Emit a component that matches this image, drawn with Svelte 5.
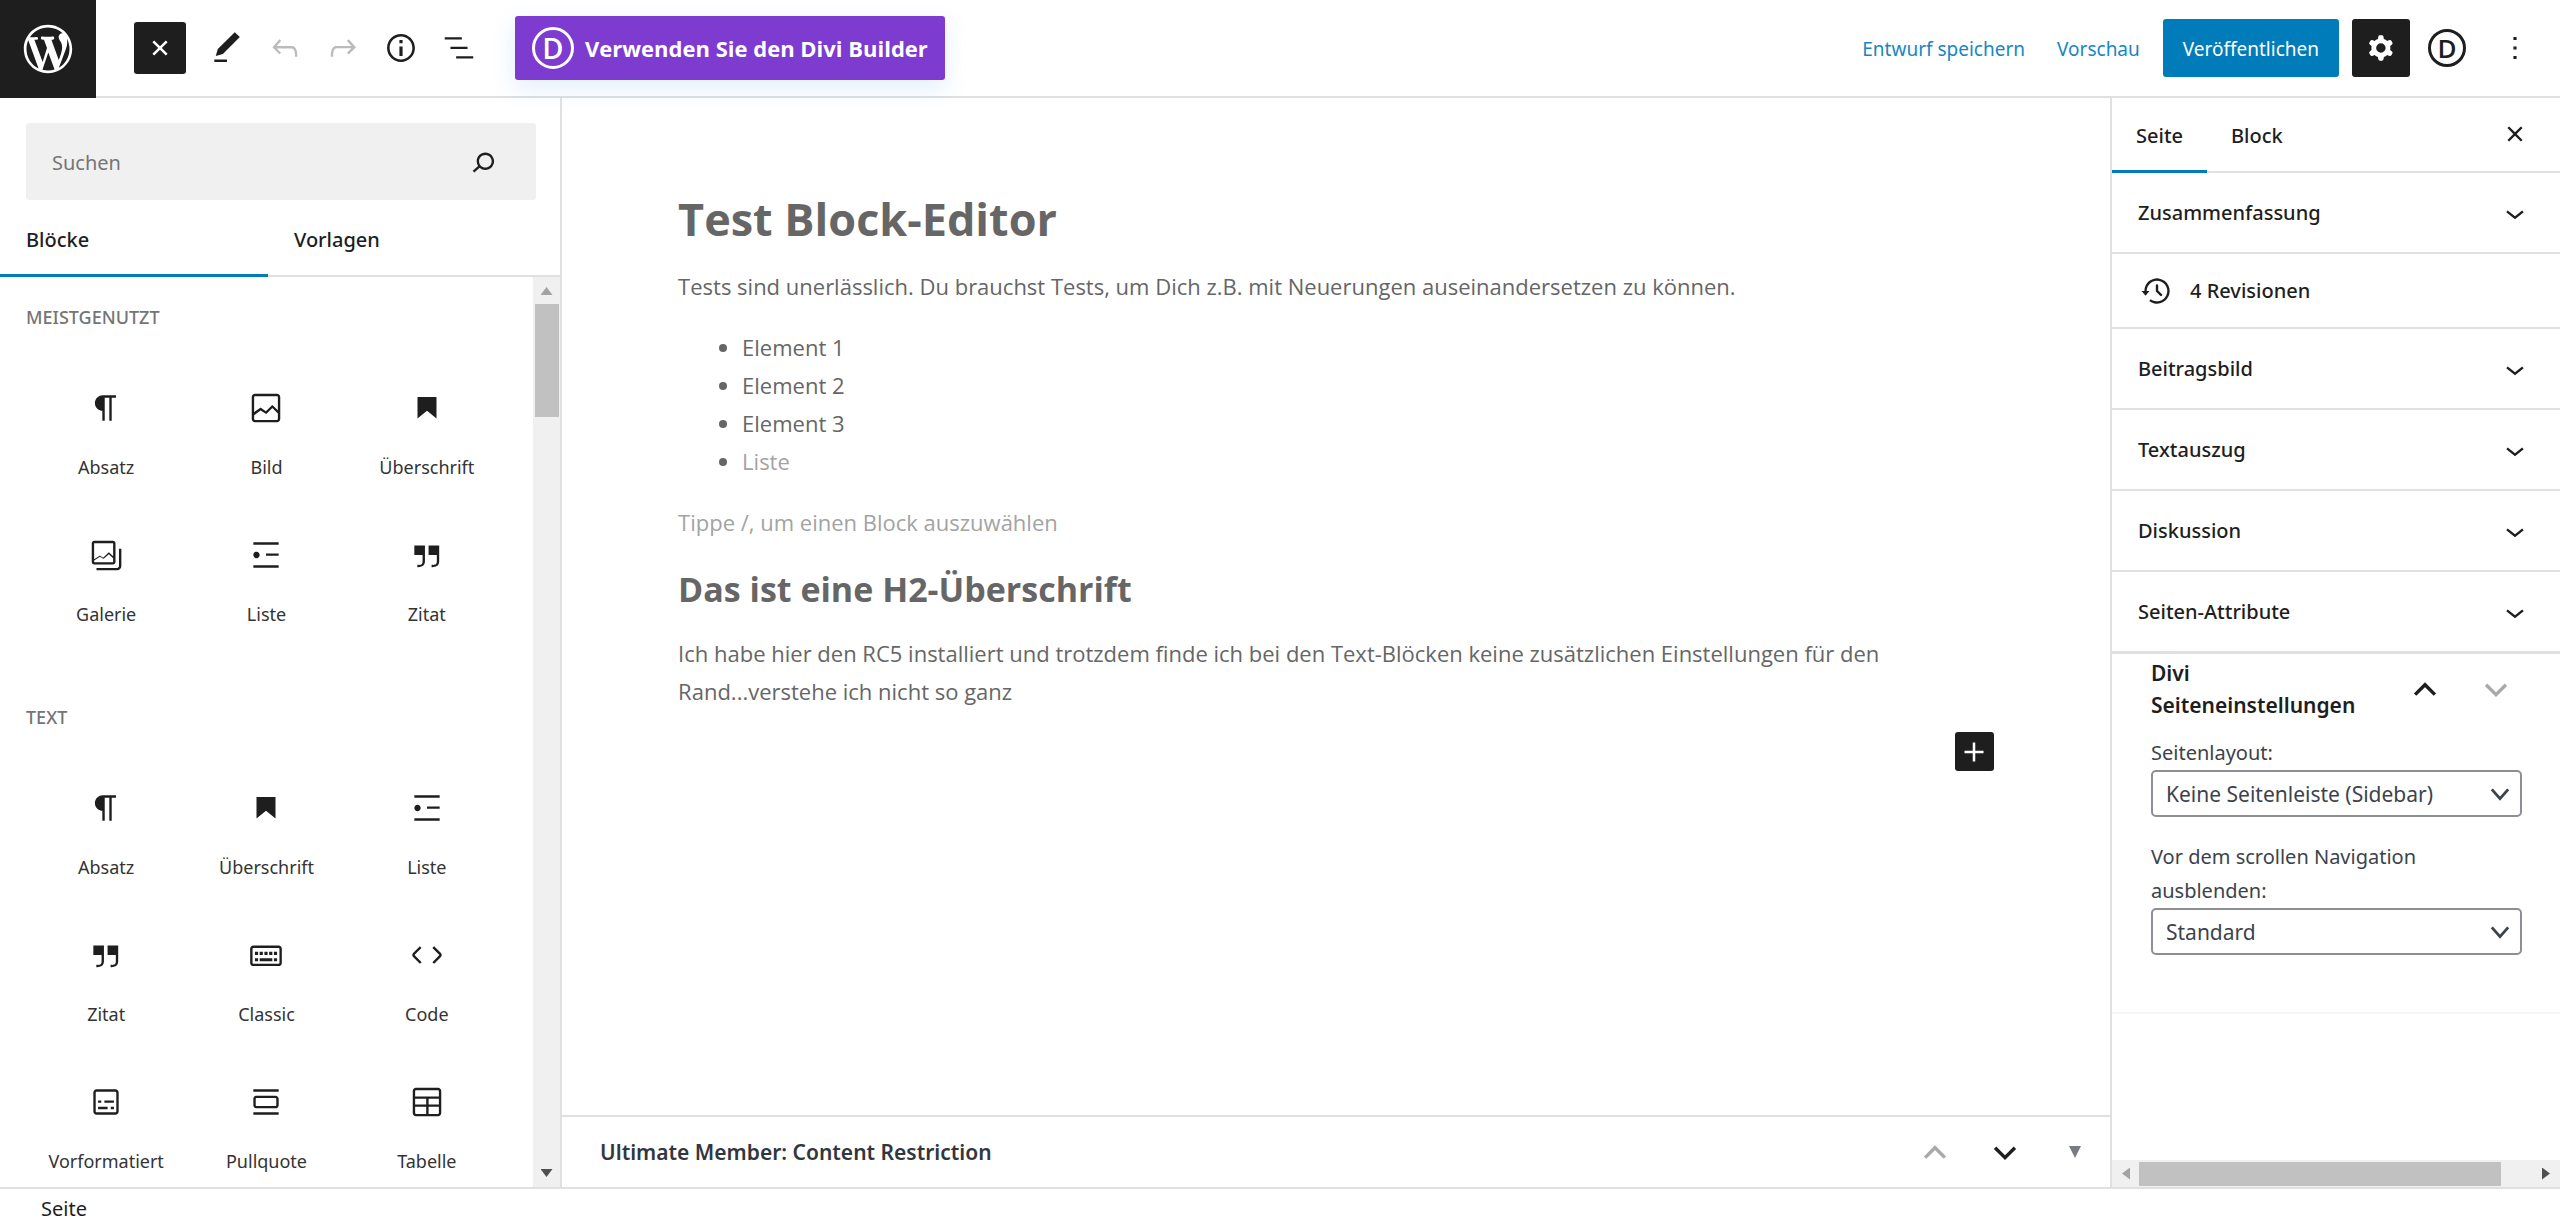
<script lang="ts">
  // 24x24 icon paths
  const icons: Record<string, string> = {
    plus: 'M18 11.2h-5.2V6h-1.6v5.2H6v1.6h5.2V18h1.6v-5.2H18z',
    pencil: 'M20.1 5.1L16.9 2 6.2 12.7l-1.3 4.4 4.5-1.3L20.1 5.1zM4 20.8h8v-1.5H4v1.5z',
    undo: 'M18.3 11.7c-.6-.6-1.4-.9-2.3-.9H6.7l2.9-3.3-1.1-1-4.5 5L8.5 16l1-1-2.7-2.7H16c.5 0 .9.2 1.3.5 1 1 1 3.4 1 4.5v.3h1.5v-.2c0-1.5 0-4.3-1.5-5.7z',
    redo: 'M15.6 6.5l-1.1 1 2.9 3.3H8c-.9 0-1.7.3-2.3.9-1.4 1.5-1.4 4.2-1.4 5.6v.2h1.5v-.3c0-1.1 0-3.5 1-4.5.3-.3.7-.5 1.3-.5h9.2L14.5 15l1.1 1.1 4.6-4.6-4.6-5z',
    info: 'M12 3.2c-4.8 0-8.8 3.9-8.8 8.8 0 4.8 3.9 8.8 8.8 8.8 4.8 0 8.8-3.9 8.8-8.8 0-4.8-4-8.8-8.8-8.8zm0 16c-4 0-7.2-3.3-7.2-7.2C4.8 8 8 4.8 12 4.8s7.2 3.3 7.2 7.2c0 4-3.2 7.2-7.2 7.2zM11 17h2v-6h-2v6zm0-8h2V7h-2v2z',
    listView: 'M13.8 5.2H3v1.5h10.8V5.2zm-3.6 12v1.5H21v-1.5H10.2zm7.2-6H6.6v1.5h10.8v-1.5z',
    search: 'M13.5 6C10.5 6 8 8.5 8 11.5c0 1.1.3 2.1.9 3l-3.4 3 1 1.1 3.4-2.9c1 .9 2.2 1.4 3.6 1.4 3 0 5.5-2.5 5.5-5.5C19 8.5 16.5 6 13.5 6zm0 9.5c-2.2 0-4-1.8-4-4s1.8-4 4-4 4 1.8 4 4-1.8 4-4 4z',
    close: 'M12 13.06l3.712 3.713 1.061-1.06L13.061 12l3.712-3.712-1.06-1.06L12 10.938 8.288 7.227l-1.061 1.06L10.939 12l-3.712 3.712 1.06 1.061L12 13.061z',
    more: 'M13 19h-2v-2h2v2zm0-6h-2v-2h2v2zm0-6h-2V5h2v2z',
    cog: 'M10.289 4.836A1 1 0 0111.275 4h1.306a1 1 0 01.987.836l.244 1.466c.787.26 1.503.679 2.108 1.218l1.393-.522a1 1 0 011.216.437l.653 1.13a1 1 0 01-.23 1.273l-1.148.944a6.025 6.025 0 010 2.435l1.149.946a1 1 0 01.23 1.272l-.653 1.13a1 1 0 01-1.216.437l-1.394-.522c-.605.54-1.32.958-2.108 1.218l-.244 1.466a1 1 0 01-.987.836h-1.306a1 1 0 01-.986-.836l-.244-1.466a5.995 5.995 0 01-2.108-1.218l-1.394.522a1 1 0 01-1.217-.436l-.653-1.131a1 1 0 01.23-1.272l1.149-.946a6.026 6.026 0 010-2.435l-1.148-.944a1 1 0 01-.23-1.272l.653-1.131a1 1 0 011.217-.437l1.393.522a5.994 5.994 0 012.108-1.218l.244-1.466zM14.929 12a3 3 0 11-6 0 3 3 0 016 0z',
    chevron: 'M17.5 11.6L12 16l-5.5-4.4.9-1.2L12 14l4.5-3.6 1 1.2z',
    backup: 'M5.5 12h1.75l-2.5 3-2.5-3H4a8 8 0 113.134 6.35l.907-1.194A6.5 6.5 0 105.5 12zm9.53 1.97l-2.28-2.28V8.5a.75.75 0 00-1.5 0V12a.747.747 0 00.218.529l2.502 2.502a.75.75 0 101.06-1.061z',
    paragraph: 'M18.3 4H9.9v-.1l-.9.2c-2.3.4-4 2.4-4 4.8s1.7 4.4 4 4.8l.7.1V20h1.5V5.5h2.9V20h1.5V5.5h2.7V4z',
    image: 'M19 3H5c-1.1 0-2 .9-2 2v14c0 1.1.9 2 2 2h14c1.1 0 2-.9 2-2V5c0-1.1-.9-2-2-2zM5 4.5h14c.3 0 .5.2.5.5v8.4l-3-2.9c-.3-.3-.8-.3-1 0L11.9 14 9 12c-.3-.2-.6-.2-.8 0l-3.7 2.6V5c0-.3.2-.5.5-.5zm14 15H5c-.3 0-.5-.2-.5-.5v-2.4l4.1-3 3 1.9c.3.2.7.2.9-.1L16 12l3.5 3.4V19c0 .3-.2.5-.5.5z',
    heading: 'M6 5v13.6l6-4.8 6 4.8V5H6z',
    gallery: 'M20.2 8v11c0 .7-.6 1.2-1.2 1.2H6v1.5h13c1.5 0 2.7-1.2 2.7-2.7V8h-1.5zM18 16.4V4.6c0-.9-.7-1.6-1.6-1.6H4.6C3.7 3 3 3.7 3 4.6v11.8c0 .9.7 1.6 1.6 1.6h11.8c.9 0 1.6-.7 1.6-1.6zM16.4 4.5c.1 0 .1.1.1.1v8.2l-2.2-2.1c-.3-.3-.7-.3-1 0l-3.1 3-1.7-1.1c-.3-.2-.6-.2-.8 0l-3.2 2.1V4.6c0-.1.1-.1.1-.1h11.8zM4.6 16.5c-.1 0-.1-.1-.1-.1v-.9l3.7-2.4 1.8 1.1c.3.2.6.2.9-.1l2.9-2.6 2.7 2.6v2.3c0 .1-.1.1-.1.1H4.6z',
    list: 'M4 4v1.5h16V4H4zm8 8.5h8V11h-8v1.5zM4 20h16v-1.5H4V20zm4-8c0-1.1-.9-2-2-2s-2 .9-2 2 .9 2 2 2 2-.9 2-2z',
    quote: 'M13 6v6h5.2v4c0 .8-.2 1.4-.5 1.7-.6.6-1.6.6-2.5.5h-.3v1.5h.5c1 0 2.3-.1 3.3-1 .6-.6 1-1.6 1-2.8V6H13zm-9 6h5.2v4c0 .8-.2 1.4-.5 1.7-.6.6-1.6.6-2.5.5h-.3v1.5h.5c1 0 2.3-.1 3.3-1 .6-.6 1-1.6 1-2.8V6H4v6z',
    classic: 'M20 6H4c-1.1 0-2 .9-2 2v9c0 1.1.9 2 2 2h16c1.1 0 2-.9 2-2V8c0-1.1-.9-2-2-2zm.5 11c0 .3-.2.5-.5.5H4c-.3 0-.5-.2-.5-.5V8c0-.3.2-.5.5-.5h16c.3 0 .5.2.5.5v9zM10 10H8v2h2v-2zm-5 2h2v-2H5v2zm8-2h-2v2h2v-2zm-5 6h8v-2H8v2zm6-4h2v-2h-2v2zm3 0h2v-2h-2v2zm0 4h2v-2h-2v2zM5 16h2v-2H5v2z',
    code: 'M20.8 10.7l-4.3-4.3-1.1 1.1 4.3 4.3c.1.1.1.3 0 .4l-4.3 4.3 1.1 1.1 4.3-4.3c.7-.8.7-1.9 0-2.6zM4.2 11.8l4.3-4.3-1-1-4.3 4.3c-.7.7-.7 1.8 0 2.5l4.3 4.3 1.1-1.1-4.3-4.3c-.2-.1-.2-.3-.1-.4z',
    preformatted: 'M18 4H6c-1.1 0-2 .9-2 2v12c0 1.1.9 2 2 2h12c1.1 0 2-.9 2-2V6c0-1.1-.9-2-2-2zm.5 14c0 .3-.2.5-.5.5H6c-.3 0-.5-.2-.5-.5V6c0-.3.2-.5.5-.5h12c.3 0 .5.2.5.5v12zM7 16.5h6V15H7v1.5zm4-4h6V11h-6v1.5zM9 11H7v1.5h2V11zm6 5.5h2V15h-2v1.5z',
    pullquote: 'M18 8H6c-1.1 0-2 .9-2 2v4c0 1.1.9 2 2 2h12c1.1 0 2-.9 2-2v-4c0-1.1-.9-2-2-2zm.5 6c0 .3-.2.5-.5.5H6c-.3 0-.5-.2-.5-.5v-4c0-.3.2-.5.5-.5h12c.3 0 .5.2.5.5v4zM4 4v1.5h16V4H4zm0 16h16v-1.5H4V20z',
    table: 'M19 3H5c-1.1 0-2 .9-2 2v14c0 1.1.9 2 2 2h14c1.1 0 2-.9 2-2V5c0-1.1-.9-2-2-2zM5 4.5h14c.3 0 .5.2.5.5v3.5h-15V5c0-.3.2-.5.5-.5zm8 5.5h6.5v3.5H13V10zm-1.5 3.5h-7V10h7v3.5zm-7 5.5v-4h7v4.5H5c-.3 0-.5-.2-.5-.5zm14.5.5h-6V15h6.5v4c0 .3-.2.5-.5.5z'
  };

  const categories = [
    {
      title: 'Meistgenutzt',
      blocks: [
        { icon: 'paragraph', label: 'Absatz' },
        { icon: 'image', label: 'Bild' },
        { icon: 'heading', label: 'Überschrift' },
        { icon: 'gallery', label: 'Galerie' },
        { icon: 'list', label: 'Liste' },
        { icon: 'quote', label: 'Zitat' }
      ]
    },
    {
      title: 'Text',
      blocks: [
        { icon: 'paragraph', label: 'Absatz' },
        { icon: 'heading', label: 'Überschrift' },
        { icon: 'list', label: 'Liste' },
        { icon: 'quote', label: 'Zitat' },
        { icon: 'classic', label: 'Classic' },
        { icon: 'code', label: 'Code' },
        { icon: 'preformatted', label: 'Vorformatiert' },
        { icon: 'pullquote', label: 'Pullquote' },
        { icon: 'table', label: 'Tabelle' }
      ]
    }
  ];

  const panels = ['Beitragsbild', 'Textauszug', 'Diskussion', 'Seiten-Attribute'];
  const items = ['Element 1', 'Element 2', 'Element 3'];

  let inserterTab = $state('Blöcke');
  let sidebarTab = $state('Seite');
  let query = $state('');
</script>

{#snippet icon(name: string)}
  <svg class="icon" viewBox="0 0 24 24" aria-hidden="true"><path fill-rule="evenodd" d={icons[name]} /></svg>
{/snippet}

{#snippet angle(points: string)}
  <svg class="angle" viewBox="0 0 24 24" aria-hidden="true"><polyline {points} /></svg>
{/snippet}

<div class="editor">
  <header>
    <a class="logo" href="#dashboard" aria-label="Dashboard">
      <svg viewBox="-2 -2 24 24" aria-hidden="true">
        <path d="M20 10c0-5.51-4.49-10-10-10C4.48 0 0 4.49 0 10c0 5.52 4.48 10 10 10 5.51 0 10-4.48 10-10zM7.78 15.37L4.37 6.22c.55-.02 1.17-.08 1.17-.08.5-.06.44-1.13-.06-1.11 0 0-1.45.11-2.37.11-.18 0-.37 0-.58-.01C4.12 2.69 6.87 1.11 10 1.11c2.33 0 4.45.87 6.05 2.34-.68-.11-1.65.39-1.65 1.58 0 .74.45 1.36.9 2.1.35.61.55 1.36.55 2.46 0 1.49-1.4 5-1.4 5l-3.03-8.37c.54-.02.82-.17.82-.17.5-.05.44-1.25-.06-1.22 0 0-1.44.12-2.38.12-.87 0-2.33-.12-2.33-.12-.5-.03-.56 1.2-.06 1.22l.92.08 1.26 3.41zM17.41 10c.24-.64.74-1.87.43-4.25.7 1.29 1.05 2.71 1.05 4.25 0 3.29-1.73 6.24-4.4 7.78.97-2.59 1.94-5.2 2.92-7.78zM6.1 18.09C3.12 16.65 1.11 13.53 1.11 10c0-1.3.23-2.48.72-3.59C3.25 10.3 4.67 14.2 6.1 18.09zm4.03-6.63l2.58 6.98c-.86.29-1.76.45-2.71.45-.79 0-1.57-.11-2.29-.33.81-2.38 1.62-4.74 2.42-7.1z" />
      </svg>
    </a>
    <div class="tools">
      <button class="toggle" aria-label="Blockeinfüger umschalten">{@render icon('plus')}</button>
      <button class="tool" aria-label="Werkzeuge">{@render icon('pencil')}</button>
      <button class="tool" aria-label="Rückgängig" disabled>{@render icon('undo')}</button>
      <button class="tool" aria-label="Wiederholen" disabled>{@render icon('redo')}</button>
      <button class="tool" aria-label="Details">{@render icon('info')}</button>
      <button class="tool" aria-label="Listenansicht">{@render icon('listView')}</button>
    </div>
    <button class="divi"><span class="ring">D</span>Verwenden Sie den Divi Builder</button>
    <div class="actions">
      <button class="link">Entwurf speichern</button>
      <button class="link">Vorschau</button>
      <button class="publish">Veröffentlichen</button>
      <button class="settings" aria-label="Einstellungen">{@render icon('cog')}</button>
      <button class="tool" aria-label="Divi"><span class="ring small">D</span></button>
      <button class="tool" aria-label="Optionen">{@render icon('more')}</button>
    </div>
  </header>

  <div class="body">
    <aside class="inserter">
      <label class="search">
        <input type="text" placeholder="Suchen" aria-label="Suchen" bind:value={query} />
        {@render icon('search')}
      </label>
      <div class="inserter-tabs">
        {#each ['Blöcke', 'Vorlagen'] as tab}
          <button class:active={inserterTab === tab} onclick={() => (inserterTab = tab)}>{tab}</button>
        {/each}
      </div>
      <div class="inserter-main">
        <div class="categories">
          {#each categories as category}
            <section>
              <h2>{category.title}</h2>
              <div class="blocks">
                {#each category.blocks as block}
                  <button class="block">
                    {@render icon(block.icon)}
                    <span>{block.label}</span>
                  </button>
                {/each}
              </div>
            </section>
          {/each}
        </div>
        <div class="scrollbar vertical">
          <i class="arrow up"></i>
          <i class="thumb"></i>
          <i class="arrow down"></i>
        </div>
      </div>
    </aside>

    <main>
      <div class="canvas">
        <article>
          <h1>Test Block-Editor</h1>
          <p>Tests sind unerlässlich. Du brauchst Tests, um Dich z.B. mit Neuerungen auseinandersetzen zu können.</p>
          <ul>
            {#each items as item}
              <li>{item}</li>
            {/each}
            <li><span class="hint">Liste</span></li>
          </ul>
          <p class="hint">Tippe /, um einen Block auszuwählen</p>
          <h2>Das ist eine H2-Überschrift</h2>
          <p>Ich habe hier den RC5 installiert und trotzdem finde ich bei den Text-Blöcken keine zusätzlichen Einstellungen für den Rand...verstehe ich nicht so ganz</p>
          <button class="add" aria-label="Block hinzufügen">{@render icon('plus')}</button>
        </article>
      </div>
      <div class="metabox">
        <h2>Ultimate Member: Content Restriction</h2>
        <button class="order" aria-label="Nach oben" disabled>{@render angle('5,16 12,9 19,16')}</button>
        <button class="order" aria-label="Nach unten">{@render angle('5,9 12,16 19,9')}</button>
        <button class="order" aria-label="Umschalten"><i class="arrow caret"></i></button>
      </div>
    </main>

    <aside class="sidebar">
      <div class="sidebar-tabs">
        {#each ['Seite', 'Block'] as tab}
          <button class:active={sidebarTab === tab} onclick={() => (sidebarTab = tab)}>{tab}</button>
        {/each}
        <button class="tool" aria-label="Schließen">{@render icon('close')}</button>
      </div>
      <div class="sidebar-main">
        <button class="panel">Zusammenfassung {@render icon('chevron')}</button>
        <button class="panel revisions">{@render icon('backup')} 4 Revisionen</button>
        {#each panels as panel}
          <button class="panel">{panel} {@render icon('chevron')}</button>
        {/each}
        <div class="divi-box">
          <div class="divi-head">
            <h2>Divi Seiteneinstellungen</h2>
            <button class="order" aria-label="Nach oben">{@render angle('5,16 12,9 19,16')}</button>
            <button class="order" aria-label="Nach unten" disabled>{@render angle('5,9 12,16 19,9')}</button>
            <button class="order" aria-label="Umschalten"><i class="arrow caret"></i></button>
          </div>
          <div class="field">
            <label for="layout">Seitenlayout:</label>
            <div class="select">
              <select id="layout"><option>Keine Seitenleiste (Sidebar)</option></select>
              {@render angle('5,8 12,16 19,8')}
            </div>
          </div>
          <div class="field">
            <label for="hide-nav">Vor dem scrollen Navigation ausblenden:</label>
            <div class="select">
              <select id="hide-nav"><option>Standard</option></select>
              {@render angle('5,8 12,16 19,8')}
            </div>
          </div>
        </div>
      </div>
      <div class="scrollbar horizontal">
        <i class="arrow left"></i>
        <i class="thumb"></i>
        <i class="arrow right"></i>
      </div>
    </aside>
  </div>

  <footer>Seite</footer>
</div>

<style>
  :global(body) {
    margin: 0;
  }

  .editor {
    display: flex;
    flex-direction: column;
    height: 100vh;
    overflow: hidden;
    background: #fff;
    color: #1e1e1e;
    font: 20px/28px "Noto Sans", sans-serif;
  }

  .editor :is(h1, h2, p, ul) {
    margin: 0;
  }

  button {
    display: flex;
    align-items: center;
    justify-content: center;
    padding: 0;
    border: 0;
    border-radius: 3px;
    background: none;
    color: inherit;
    font: inherit;
    white-space: nowrap;
    cursor: pointer;
  }

  .icon {
    flex: none;
    width: 38px;
    height: 38px;
    fill: currentColor;
  }

  .angle {
    flex: none;
    width: 34px;
    height: 34px;
    fill: none;
    stroke: currentColor;
    stroke-width: 2.4;
  }

  header {
    display: flex;
    align-items: center;
    flex: none;
    height: 96px;
    border-bottom: 2px solid #e0e0e0;
  }

  .logo {
    display: flex;
    align-items: center;
    justify-content: center;
    align-self: flex-start;
    width: 96px;
    height: 98px;
    background: #1e1e1e;
  }

  .logo svg {
    width: 58px;
    height: 58px;
    fill: #fff;
  }

  .tools {
    display: flex;
    align-items: center;
    margin: 0 27px 0 38px;
  }

  .toggle {
    width: 52px;
    height: 52px;
    margin-right: 12px;
    background: #1e1e1e;
    color: #fff;
  }

  .toggle .icon {
    transform: rotate(45deg);
  }

  .tool {
    width: 58px;
    height: 58px;
  }

  .tool:disabled {
    color: #bbb;
  }

  .divi {
    gap: 11px;
    height: 64px;
    padding: 0 17px;
    background: #7e3bd0;
    box-shadow: 0 8px 24px rgba(43, 135, 218, 0.14);
    color: #fff;
    font: 700 22px/30px "Open Sans", sans-serif;
  }

  .ring {
    display: flex;
    align-items: center;
    justify-content: center;
    box-sizing: border-box;
    width: 42px;
    height: 42px;
    border: 3px solid currentColor;
    border-radius: 50%;
    font: 600 29px/36px "Open Sans", sans-serif;
  }

  .ring.small {
    width: 38px;
    height: 38px;
    font: 600 26px/32px "Open Sans", sans-serif;
  }

  .actions {
    display: flex;
    align-items: center;
    margin: 0 16px 0 auto;
    font-size: 19px;
  }

  .link {
    margin-right: 32px;
    padding-top: 2px;
    color: #1787c2;
  }

  .publish {
    height: 58px;
    margin: 0 13px 0 -9px;
    padding: 2px 20px 0;
    background: #007cba;
    color: #fff;
  }

  .settings {
    width: 58px;
    height: 58px;
    margin-right: 8px;
    background: #1e1e1e;
    color: #fff;
  }

  .actions .tool:last-child {
    margin-left: 10px;
  }

  .body {
    display: flex;
    flex: 1;
    min-height: 0;
  }

  .inserter {
    display: flex;
    flex-direction: column;
    flex: none;
    width: 560px;
    border-right: 2px solid #e0e0e0;
  }

  .search {
    display: flex;
    align-items: center;
    height: 77px;
    margin: 25px 24px 0 26px;
    padding: 0 34px 0 26px;
    border-radius: 3px;
    background: #f0f0f0;
  }

  .search input {
    flex: 1;
    min-width: 0;
    padding: 2px 0 0;
    border: 0;
    outline: 0;
    background: none;
    color: inherit;
    font: inherit;
  }

  .search input::placeholder {
    color: #757575;
    opacity: 1;
  }

  .inserter-tabs {
    display: flex;
    height: 75px;
    border-bottom: 2px solid #e0e0e0;
  }

  .inserter-tabs button {
    height: 77px;
    justify-content: flex-start;
    width: 268px;
    padding: 6px 26px 0;
    border-bottom: 3px solid transparent;
    border-radius: 0;
    box-sizing: border-box;
    font-weight: 500;
  }

  .inserter-tabs .active,
  .sidebar-tabs .active {
    border-bottom-color: #007cba;
  }

  .inserter-main {
    display: flex;
    flex: 1;
    min-height: 0;
  }

  .categories {
    flex: 1;
    overflow: hidden;
  }

  .categories section {
    padding: 26px;
  }

  .categories h2 {
    padding-bottom: 26px;
    color: #757575;
    font-size: 18px;
    font-weight: 500;
    line-height: 28px;
    text-transform: uppercase;
  }

  .blocks {
    display: grid;
    grid-template-columns: repeat(3, 1fr);
  }

  .block {
    flex-direction: column;
    justify-content: flex-start;
    gap: 26px;
    box-sizing: border-box;
    height: 147px;
    padding-top: 32px;
  }

  .block span {
    color: #333;
    font-size: 18px;
  }

  .scrollbar {
    display: flex;
    align-items: center;
    flex: none;
    background: #f0f0f0;
  }

  .scrollbar.vertical {
    flex-direction: column;
    width: 27px;
    padding: 10px 0;
  }

  .scrollbar.horizontal {
    height: 27px;
    padding: 0 10px;
  }

  .thumb {
    background: #c1c1c1;
  }

  .vertical .thumb {
    width: 24px;
    height: 113px;
    margin: 9px 0 auto;
  }

  .horizontal .thumb {
    width: 362px;
    height: 24px;
    margin: 0 auto 0 9px;
  }

  .arrow {
    flex: none;
    width: 12px;
    height: 8px;
    background: #505050;
    clip-path: polygon(0 0, 100% 0, 50% 100%);
  }

  .arrow.up {
    background: #a3a3a3;
    clip-path: polygon(50% 0, 100% 100%, 0 100%);
  }

  .arrow.left,
  .arrow.right {
    width: 8px;
    height: 12px;
    clip-path: polygon(0 0, 100% 50%, 0 100%);
  }

  .arrow.left {
    background: #a3a3a3;
    clip-path: polygon(100% 0, 100% 100%, 0 50%);
  }

  .arrow.caret {
    height: 12px;
    background: #787c82;
  }

  main {
    display: flex;
    flex-direction: column;
    flex: 1;
    min-width: 0;
  }

  .canvas {
    flex: 1;
    overflow: hidden;
  }

  article {
    width: 85%;
    margin: 0 auto;
    padding-top: 89px;
    color: #666;
    font: 22px/38px "Open Sans", sans-serif;
  }

  article h1 {
    color: #666;
    font-size: 45px;
    font-weight: 700;
    line-height: 64px;
  }

  article p {
    padding-top: 16px;
  }

  article ul {
    padding: 23px 0 7px 64px;
  }

  article h2 {
    padding: 23px 0 4px;
    font-size: 34px;
    font-weight: 700;
    line-height: 50px;
  }

  .hint {
    color: #a3a3a3;
  }

  .add {
    width: 39px;
    height: 39px;
    margin: 22px 0 0 auto;
    background: #1e1e1e;
    color: #fff;
  }

  .metabox {
    display: flex;
    align-items: center;
    height: 70px;
    border-top: 2px solid #e0e0e0;
  }

  .metabox h2,
  .divi-head h2 {
    flex: 1;
    font-size: 21px;
    font-weight: 600;
    line-height: 32px;
  }

  .metabox h2 {
    padding-left: 38px;
    color: #32373c;
  }

  .order {
    flex: none;
    width: 70px;
    height: 58px;
  }

  .order:disabled {
    color: #a7aaad;
  }

  .sidebar {
    display: flex;
    flex-direction: column;
    flex: none;
    width: 448px;
    border-left: 2px solid #e0e0e0;
    font-weight: 500;
  }

  .sidebar-tabs {
    display: flex;
    height: 73px;
    border-bottom: 2px solid #e0e0e0;
  }

  .sidebar-tabs button {
    height: 75px;
    padding: 4px 24px 0;
    border-bottom: 3px solid transparent;
    border-radius: 0;
    box-sizing: border-box;
  }

  .sidebar-tabs .tool {
    margin: 0 16px 0 auto;
    padding: 0;
  }

  .sidebar-main {
    flex: 1;
    overflow: hidden;
  }

  .panel {
    justify-content: space-between;
    box-sizing: border-box;
    width: 100%;
    height: 81px;
    padding: 0 26px;
    border-bottom: 2px solid #e0e0e0;
    border-radius: 0;
  }

  .panel.revisions {
    justify-content: flex-start;
    gap: 14px;
    height: 75px;
  }

  .divi-box {
    width: 488px;
    height: 358px;
    border-top: 1px solid #e0e0e0;
    border-bottom: 2px solid #f6f6f6;
    font-weight: 400;
  }

  .divi-head {
    display: flex;
    align-items: center;
    padding: 3px 0 15px 39px;
  }

  .divi-head h2 {
    flex: none;
    width: 238px;
    white-space: normal;
  }

  .divi-head .order {
    width: 71px;
  }

  .field {
    width: 371px;
    padding: 0 0 23px 39px;
    color: #3c434a;
    line-height: 34px;
  }

  .field label {
    display: block;
    width: 290px;
  }

  .select {
    display: grid;
    align-items: center;
  }

  .select select,
  .select .angle {
    grid-area: 1 / 1;
  }

  .select select {
    appearance: none;
    height: 47px;
    padding: 0 13px;
    border: 2px solid #8c8f94;
    border-radius: 5px;
    background: #fff;
    color: #3c434a;
    font: 21px/28px "Noto Sans", sans-serif;
  }

  .select .angle {
    justify-self: end;
    width: 28px;
    height: 28px;
    margin-right: 8px;
    pointer-events: none;
  }

  footer {
    flex: none;
    height: 38px;
    padding-left: 41px;
    border-top: 2px solid #e0e0e0;
    line-height: 40px;
  }
</style>
